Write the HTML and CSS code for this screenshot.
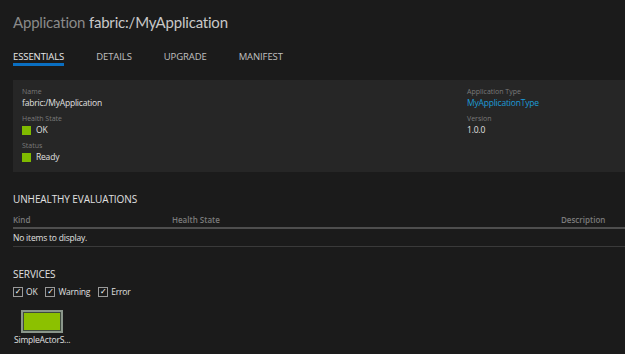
FILE: index.html
```html
<!DOCTYPE html>
<html>
<head>
<meta charset="utf-8">
<link rel="stylesheet" href="styles.css">
</head>
<body>
<div class="page">
  <h1 class="title"><span class="title-kind">Application</span> <span class="title-name">fabric:/MyApplication</span></h1>
  <nav class="tabs">
    <span class="tab active">ESSENTIALS</span>
    <span class="tab">DETAILS</span>
    <span class="tab">UPGRADE</span>
    <span class="tab">MANIFEST</span>
  </nav>
  <section class="essentials">
    <div class="col">
      <div class="field">
        <div class="label">Name</div>
        <div class="value">fabric:/MyApplication</div>
      </div>
      <div class="field">
        <div class="label">Health State</div>
        <div class="value"><span class="sq"></span>OK</div>
      </div>
      <div class="field">
        <div class="label">Status</div>
        <div class="value"><span class="sq"></span>Ready</div>
      </div>
    </div>
    <div class="col col-right">
      <div class="field">
        <div class="label">Application Type</div>
        <div class="value link">MyApplicationType</div>
      </div>
      <div class="field">
        <div class="label">Version</div>
        <div class="value">1.0.0</div>
      </div>
    </div>
  </section>
  <h2 class="section-title">UNHEALTHY EVALUATIONS</h2>
  <div class="table">
    <div class="thead">
      <span class="th th-kind">Kind</span>
      <span class="th th-health">Health State</span>
      <span class="th th-desc">Description</span>
    </div>
    <div class="empty">No items to display.</div>
  </div>
  <h2 class="section-title services-title">SERVICES</h2>
  <div class="filters">
    <label class="chk"><span class="box">&#10003;</span>OK</label>
    <label class="chk"><span class="box">&#10003;</span>Warning</label>
    <label class="chk"><span class="box">&#10003;</span>Error</label>
  </div>
  <div class="tiles">
    <div class="tile-wrap">
      <div class="tile"><div class="tile-fill"></div></div>
      <div class="tile-name">SimpleActorS...</div>
    </div>
  </div>
</div>
</body>
</html>
```

FILE: styles.css
```css
html, body {
  margin: 0;
  padding: 0;
  background: #1b1b1b;
  font-family: "Open Sans", "Noto Sans", sans-serif;
  color: #dcdcdc;
  overflow: hidden;
}
.page {
  padding: 0 0 0 13px;
  width: 612px;
}
.title {
  margin: 0;
  padding-top: 10px;
  font-family: "Lato", "Open Sans", sans-serif;
  font-size: 15px;
  font-weight: 400;
  line-height: 24px;
  letter-spacing: -0.2px;
}
.title-kind { color: #8a8a8a; }
.title-name { color: #c8c8c8; }
.tabs {
  display: flex;
  gap: 32px;
  margin-top: 17px;
  height: 17px;
}
.tab {
  font-size: 9.5px;
  color: #c0c0c0;
  line-height: 12px;
  letter-spacing: -0.1px;
}
.tab.active {
  color: #e8e8e8;
  border-bottom: 3px solid #0a6fc2;
  height: 12px;
}
.essentials {
  margin-top: 12px;
  background: #262626;
  height: 92px;
  display: flex;
  padding: 0 0 0 9px;
  box-sizing: border-box;
}
.col {
  padding-top: 7px;
  width: 445px;
}
.col-right { width: auto; }
.field { margin-bottom: 5px; }
.label {
  font-size: 7px;
  color: #7a7a7a;
  line-height: 10px;
}
.value {
  font-size: 8.5px;
  color: #e0e0e0;
  line-height: 12px;
  display: flex;
  align-items: center;
  letter-spacing: -0.2px;
}
.value.link { color: #1d9bd6; }
.sq {
  width: 9px;
  height: 9px;
  background: #7fba00;
  margin-right: 5px;
}
.section-title {
  margin: 0;
  margin-top: 20px;
  font-size: 10px;
  font-weight: 400;
  color: #e0e0e0;
  line-height: 14px;
  letter-spacing: -0.1px;
}
.table { margin-top: 5px; }
.thead {
  display: flex;
  height: 14px;
  border-bottom: 2px solid #4e4e4e;
  align-items: flex-end;
  padding-bottom: 2px;
}
.th {
  font-size: 8px;
  font-weight: 600;
  color: #7c7c7c;
  line-height: 11px;
}
.th-kind { width: 159px; }
.th-health { flex: 1; }
.th-desc { width: 64px; }
.empty {
  font-size: 8.5px;
  color: #e0e0e0;
  line-height: 17px;
  border-bottom: 1px solid #3a3a3a;
  letter-spacing: -0.2px;
}
.services-title { margin-top: 20px; }
.filters {
  display: flex;
  gap: 8px;
  margin-top: 5px;
}
.chk {
  display: flex;
  align-items: center;
  font-size: 8.5px;
  color: #e0e0e0;
  line-height: 12px;
  letter-spacing: -0.2px;
}
.box {
  width: 8px;
  height: 8px;
  border: 1px solid #9a9a9a;
  margin-right: 3px;
  font-size: 8px;
  line-height: 8px;
  text-align: center;
  color: #ffffff;
  font-family: "DejaVu Sans", sans-serif;
}
.tiles {
  display: flex;
  margin-top: 12px;
  padding-left: 1px;
}
.tile-wrap {
  display: flex;
  flex-direction: column;
  align-items: center;
}
.tile {
  width: 42px;
  height: 23px;
  box-sizing: border-box;
  background: #3e4a3e;
  border: 2px solid #8a968a;
  padding: 1px;
  margin-left: 0;
}
.tile-fill {
  width: 100%;
  height: 100%;
  background: #8cc100;
}
.tile-name {
  font-size: 8.5px;
  color: #e0e0e0;
  line-height: 14px;
  letter-spacing: -0.2px;
}
```
